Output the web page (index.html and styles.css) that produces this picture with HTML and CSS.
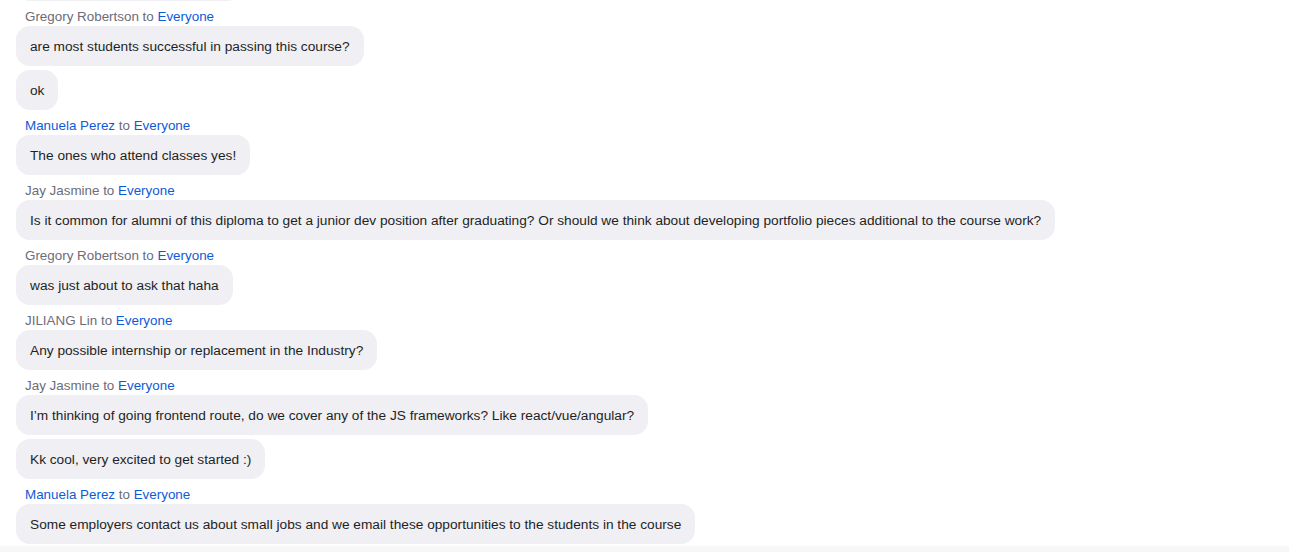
FILE: index.html
```html
<!DOCTYPE html>
<html lang="en">
<head>
<meta charset="utf-8">
<title>Chat</title>
<link rel="stylesheet" href="styles.css">
</head>
<body>
<div class="chat">
  <div class="messages">
    <div class="bubble bubble-prev">&nbsp;</div>

    <div class="sender"><span class="name">Gregory Robertson</span> to <span class="to">Everyone</span></div>
    <div class="bubble">are most students successful in passing this course?</div>
    <div class="bubble">ok</div>

    <div class="sender"><span class="name me">Manuela Perez</span> to <span class="to">Everyone</span></div>
    <div class="bubble">The ones who attend classes yes!</div>

    <div class="sender"><span class="name">Jay Jasmine</span> to <span class="to">Everyone</span></div>
    <div class="bubble">Is it common for alumni of this diploma to get a junior dev position after graduating? Or should we think about developing portfolio pieces additional to the course work?</div>

    <div class="sender"><span class="name">Gregory Robertson</span> to <span class="to">Everyone</span></div>
    <div class="bubble">was just about to ask that haha</div>

    <div class="sender"><span class="name">JILIANG Lin</span> to <span class="to">Everyone</span></div>
    <div class="bubble">Any possible internship or replacement in the Industry?</div>

    <div class="sender"><span class="name">Jay Jasmine</span> to <span class="to">Everyone</span></div>
    <div class="bubble">I’m thinking of going frontend route, do we cover any of the JS frameworks? Like react/vue/angular?</div>
    <div class="bubble">Kk cool, very excited to get started :)</div>

    <div class="sender"><span class="name me">Manuela Perez</span> to <span class="to">Everyone</span></div>
    <div class="bubble">Some employers contact us about small jobs and we email these opportunities to the students in the course</div>
  </div>
</div>
<div class="composer-edge"></div>
</body>
</html>
```

FILE: styles.css
```css
html, body {
  margin: 0;
  padding: 0;
  background: #ffffff;
}

body {
  font-family: "Liberation Sans", Arial, sans-serif;
  color: #1f1f24;
  width: 1289px;
  height: 552px;
  overflow: hidden;
}

.chat {
  height: 546px;
  overflow: hidden;
}

.messages {
  display: flex;
  flex-direction: column;
  align-items: flex-start;
  padding-left: 16px;
  margin-top: -39px;
}

.bubble {
  background: #efeff4;
  border-radius: 14px;
  padding: 13px 14px 11px;
  font-size: 13.7px;
  line-height: 16px;
  white-space: nowrap;
}

.bubble + .bubble {
  margin-top: 4px;
}

.bubble-prev {
  width: 197px;
}

.sender {
  padding: 8px 0 1px 9px;
  line-height: 16px;
  color: #6c6c7a;
  font-size: 13.4px;
}

.sender .to,
.sender .me {
  color: #0e5bd6;
}

.composer-edge {
  height: 6px;
  background: #f7f7fa;
}
```
